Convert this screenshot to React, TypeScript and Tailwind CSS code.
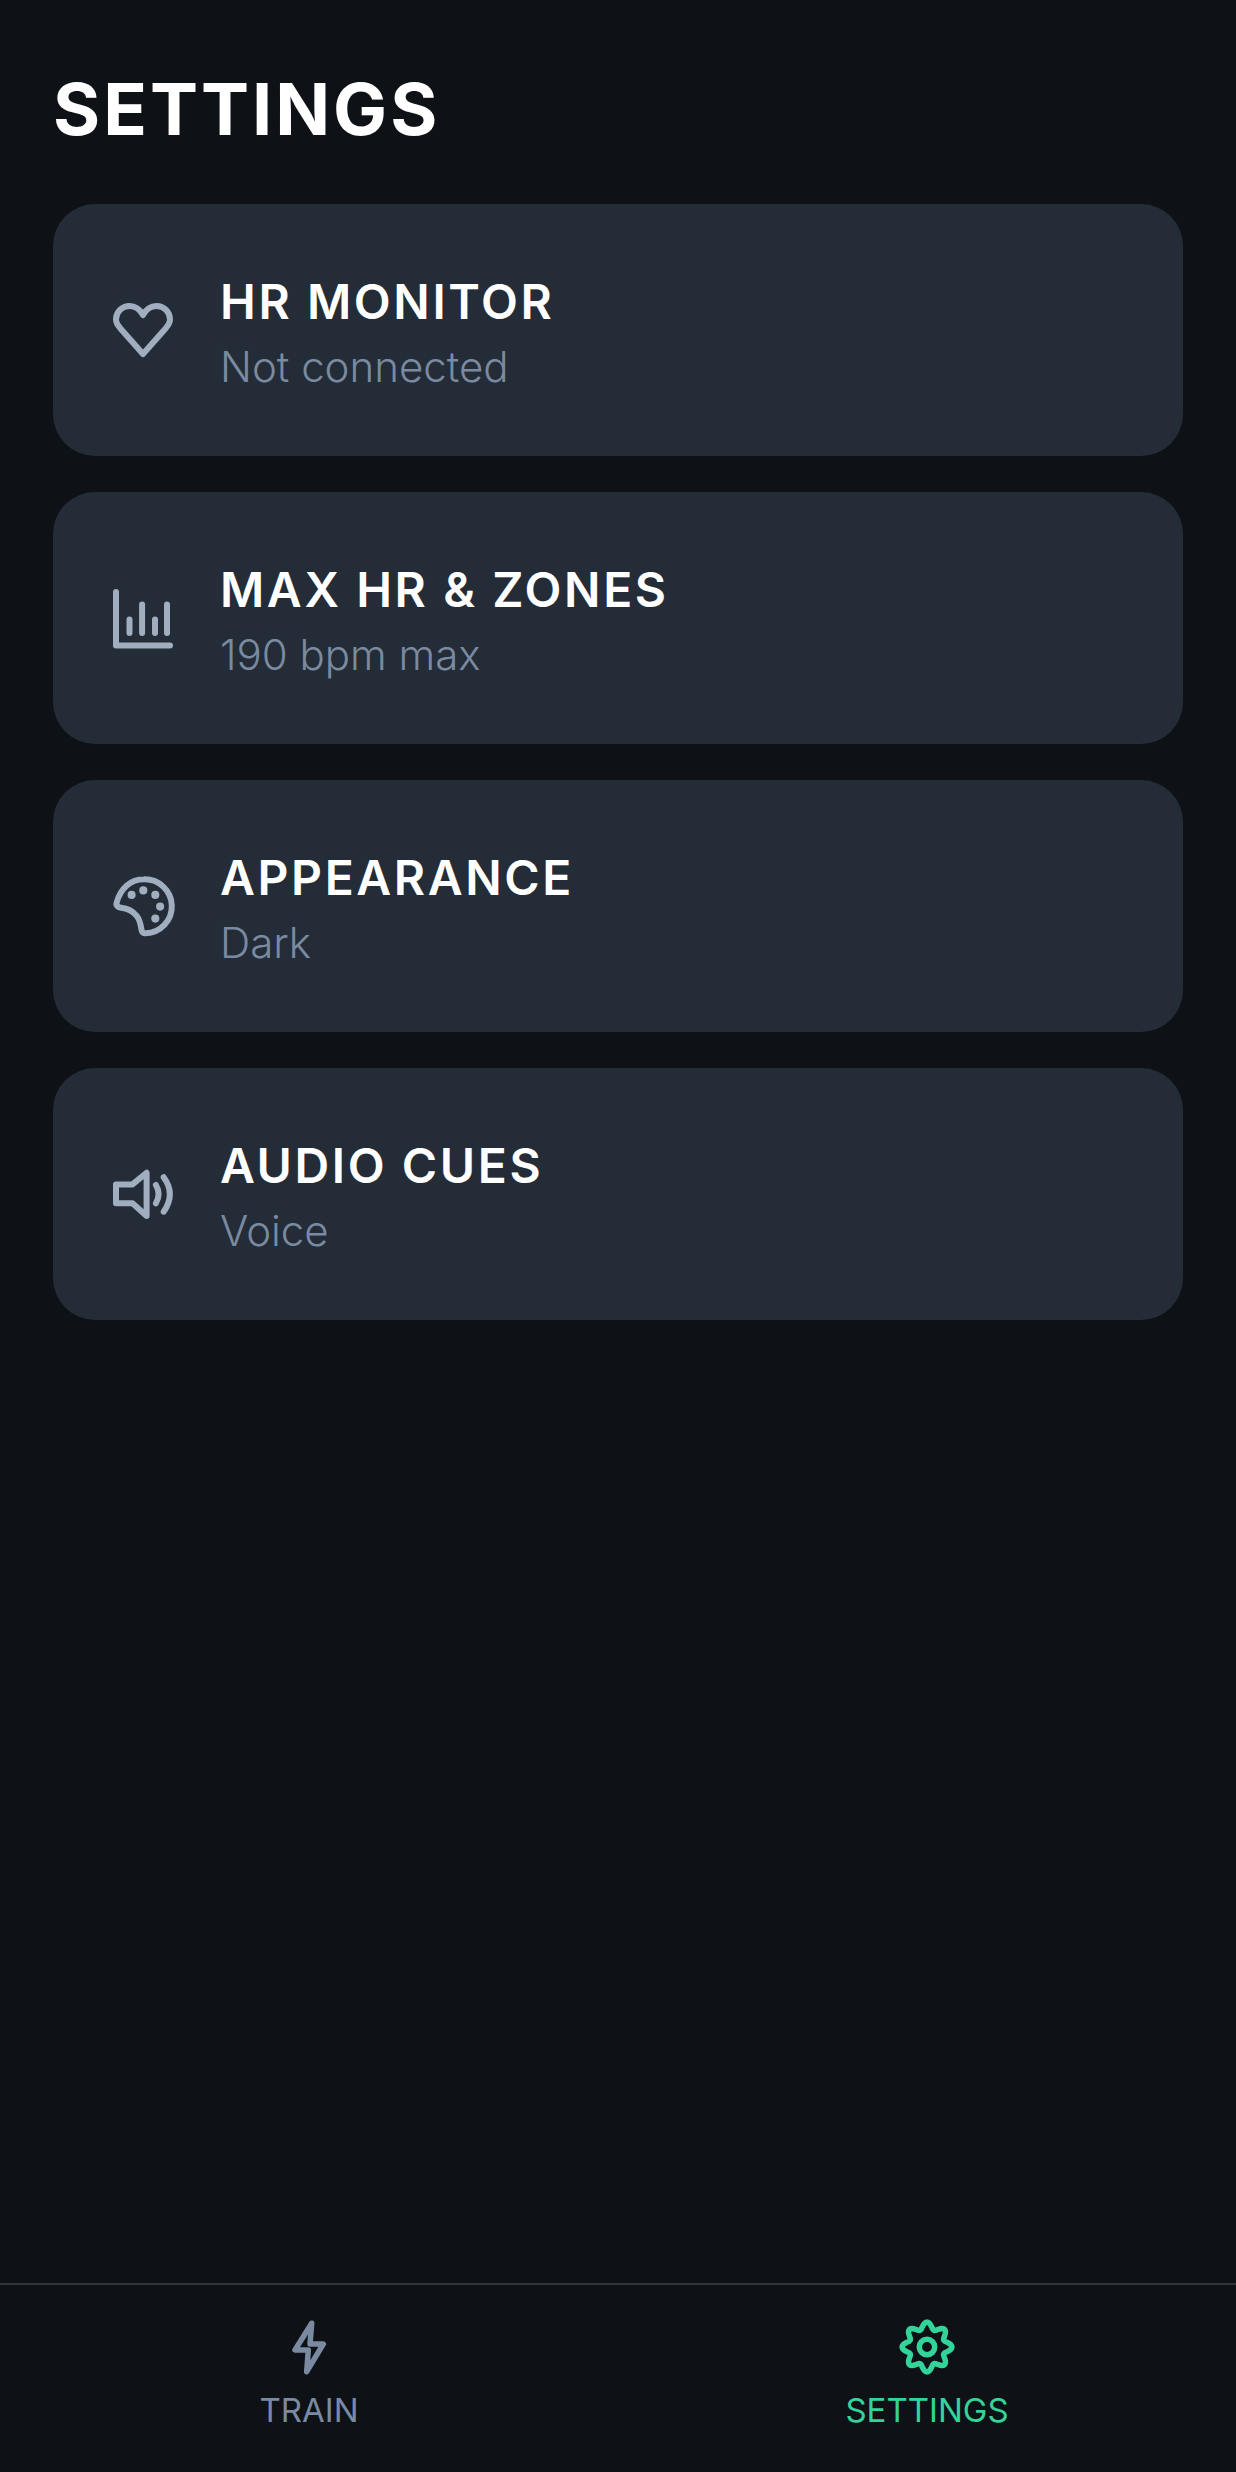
const gearPath = (() => {
  const pts: string[] = [];
  for (let i = 0; i < 120; i++) {
    const t = (i / 120) * Math.PI * 2;
    const r = 21.5 + 3.4 * Math.cos(8 * t);
    pts.push(`${(33 + r * Math.sin(t)).toFixed(2)} ${(33 - r * Math.cos(t)).toFixed(2)}`);
  }
  return "M" + pts.join("L") + "Z";
})();

const Svg = ({ children }: { children: React.ReactNode }) => (
  <svg
    viewBox="0 0 24 24"
    fill="none"
    stroke="currentColor"
    strokeWidth="2"
    strokeLinecap="round"
    strokeLinejoin="round"
    className="w-[72px] h-[72px] shrink-0 text-[#a0aec0]"
  >
    {children}
  </svg>
);

const rows = [
  {
    title: "HR MONITOR",
    sub: "Not connected",
    icon: (
      <Svg>
        <path d="M12 20l-7.6-8.6C3.4 10.2 3 9.5 3 8.5 3 6 5 4 7.5 4c1.8 0 3.4 1 4.5 3 1.1-2 2.7-3 4.5-3C19 4 21 6 21 8.5c0 1-.4 1.7-1.4 2.9z" />
      </Svg>
    ),
  },
  {
    title: "MAX HR & ZONES",
    sub: "190 bpm max",
    icon: (
      <Svg>
        <path d="M3 3.3V21.2H21" />
        <path d="M7.5 12.5V17M11.7 7.5V17M16 12.5V17M20 7.5V17" />
      </Svg>
    ),
  },
  {
    title: "APPEARANCE",
    sub: "Dark",
    icon: (
      <Svg>
        <path d="M12.3 3.1a9 9 0 0 1 .6 18c-.8.1-1.3-.4-1.4-1.2-.3-2-.6-3.4-1.6-4.6-1.4-1.7-3.3-2.5-5.2-2.7-1-.1-1.8-.8-1.5-1.7C4.5 6 8 3.1 12.3 3.1z" />
        <g fill="currentColor" stroke="none">
          <circle cx="8.2" cy="8.3" r="1.35" />
          <circle cx="12.1" cy="6.8" r="1.35" />
          <circle cx="16.1" cy="8.3" r="1.35" />
          <circle cx="17.7" cy="12.2" r="1.35" />
          <circle cx="16.1" cy="16.2" r="1.35" />
        </g>
      </Svg>
    ),
  },
  {
    title: "AUDIO CUES",
    sub: "Voice",
    icon: (
      <Svg>
        <path d="M3 8.8H8.5L13.2 4.9V19.3L8.5 15.1H3Z" />
        <path d="M16.3 9Q18.1 12 16.3 15.1" />
        <path d="M18.9 6.4Q23 12 18.9 17.9" />
      </Svg>
    ),
  },
];

export default function App() {
  return (
    <div className="w-[1236px] h-[2472px] bg-[#0e1216] flex flex-col font-['Inter',sans-serif]">
      <div className="flex-1 px-[53px] pt-[67px]">
        <h1 className="text-[72px] leading-[84px] font-bold text-white tracking-[3px]">SETTINGS</h1>
        <div className="flex flex-col gap-[36px] mt-[53px]">
          {rows.map((r) => (
            <div key={r.title} className="h-[252px] rounded-[42px] bg-[#242c37] flex items-center pl-[54px] gap-[41px]">
              {r.icon}
              <div className="flex flex-col pt-[9px]">
                <div className="text-[48px] leading-[60px] font-semibold text-white tracking-[2.6px]">{r.title}</div>
                <div className="text-[42px] leading-[60px] font-light text-[#7a8aa0] mt-[5px]">{r.sub}</div>
              </div>
            </div>
          ))}
        </div>
      </div>
      <div className="h-[189px] border-t-[2px] border-[#2d333b] grid grid-cols-2">
        <div className="flex flex-col items-center pt-[29px] text-[#7a8aa0]">
          <svg viewBox="0 0 66 66" className="w-[66px] h-[66px]" fill="none" stroke="currentColor" strokeWidth="5.5" strokeLinejoin="round">
            <path d="M35.7 9.3L19 36H32.3L30.7 57.7L47.3 30H34Z" />
          </svg>
          <span className="text-[33px] leading-[40px] mt-[10px]">TRAIN</span>
        </div>
        <div className="flex flex-col items-center pt-[29px] text-[#34d399]">
          <svg viewBox="0 0 66 66" className="w-[66px] h-[66px]" fill="none" stroke="currentColor" strokeWidth="5.5" strokeLinejoin="round">
            <path d={gearPath} />
            <circle cx="33" cy="33" r="7.7" />
          </svg>
          <span className="text-[33px] leading-[40px] mt-[10px]">SETTINGS</span>
        </div>
      </div>
    </div>
  );
}
